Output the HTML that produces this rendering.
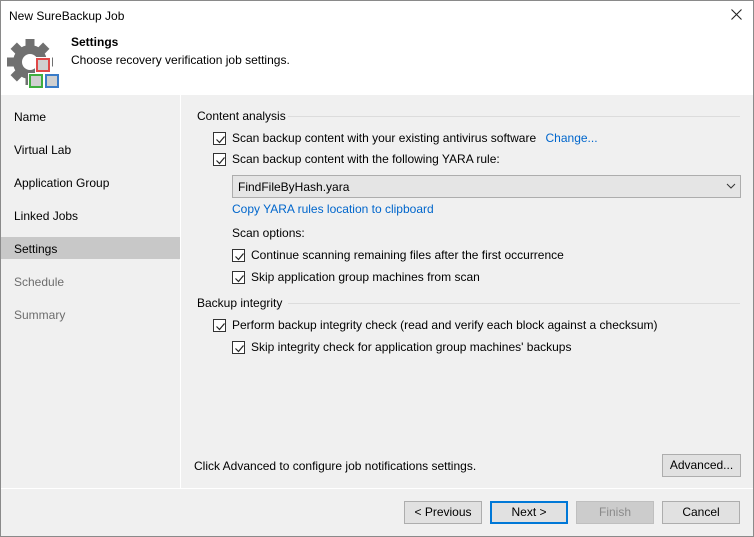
<!DOCTYPE html>
<html><head><style>
*{box-sizing:border-box;margin:0;padding:0}
body{width:754px;height:537px;overflow:hidden;font-family:"Liberation Sans",sans-serif;font-size:12px;color:#000;background:#f0f0f0;position:relative}
.win{position:absolute;left:0;top:0;width:754px;height:537px;border:1px solid #8a8a8a}
.abs{position:absolute;white-space:nowrap}
.cb{position:absolute;width:13px;height:13px;border:1px solid #333;background:#fff}
.cb svg{position:absolute;left:1px;top:1px}
.btn{position:absolute;height:23px;border:1px solid #adadad;background:#e1e1e1;text-align:center;line-height:21px}
.link{color:#0066cc}
.nav{position:absolute;left:14px}
</style></head><body>
<div class="win"></div>
<div class="abs" style="left:1px;top:1px;width:752px;height:94px;background:#fff"></div>
<div class="abs" style="left:9px;top:9px;font-size:12px">New SureBackup Job</div>
<svg class="abs" style="left:731px;top:9px" width="11" height="11"><path d="M0.5 0.5l10 10M10.5 0.5l-10 10" stroke="#222" stroke-width="1.1"/></svg>
<svg class="abs" style="left:2px;top:34px" width="60" height="56" viewBox="0 0 60 56">
<g fill="#707070"><circle cx="28" cy="28" r="17"/>
<rect x="23.5" y="5" width="9" height="46"/><rect x="5" y="23.5" width="46" height="9"/>
<rect x="23.5" y="5" width="9" height="46" transform="rotate(45 28 28)"/><rect x="23.5" y="5" width="9" height="46" transform="rotate(-45 28 28)"/></g>
<circle cx="28" cy="28" r="8" fill="#fff"/>
<rect x="33" y="23" width="17" height="16" fill="#fff"/>
<rect x="26" y="39" width="33" height="17" fill="#fff"/>
<rect x="35" y="25" width="12" height="12" fill="#d0d0d0" stroke="#e04848" stroke-width="2"/>
<rect x="28" y="41" width="12" height="12" fill="#d0d0d0" stroke="#3fae3f" stroke-width="2"/>
<rect x="44" y="41" width="12" height="12" fill="#d0d0d0" stroke="#3a7cc8" stroke-width="2"/>
</svg>
<div class="abs" style="left:71px;top:35px;font-weight:bold">Settings</div>
<div class="abs" style="left:71px;top:53px">Choose recovery verification job settings.</div>
<div class="abs" style="left:180px;top:95px;width:1px;height:393px;background:#fff"></div>
<div class="abs" style="left:1px;top:237px;width:179px;height:22px;background:#c8c8c8"></div>
<div class="nav abs" style="top:110px">Name</div>
<div class="nav abs" style="top:143px">Virtual Lab</div>
<div class="nav abs" style="top:176px">Application Group</div>
<div class="nav abs" style="top:209px">Linked Jobs</div>
<div class="nav abs" style="top:242px">Settings</div>
<div class="nav abs" style="top:275px;color:#6d6d6d">Schedule</div>
<div class="nav abs" style="top:308px;color:#6d6d6d">Summary</div>

<div class="abs" style="left:197px;top:109px">Content analysis</div>
<div class="abs" style="left:288px;top:116px;width:452px;height:1px;background:#dcdcdc"></div>
<div class="cb" style="left:213px;top:132px"><svg width="11" height="11"><path d="M1.5 5.5l3 3 5-6" fill="none" stroke="#222" stroke-width="1.2"/></svg></div>
<div class="abs" style="left:232px;top:131px">Scan backup content with your existing antivirus software <span class="link" style="margin-left:6px">Change...</span></div>
<div class="cb" style="left:213px;top:153px"><svg width="11" height="11"><path d="M1.5 5.5l3 3 5-6" fill="none" stroke="#222" stroke-width="1.2"/></svg></div>
<div class="abs" style="left:232px;top:152px">Scan backup content with the following YARA rule:</div>
<div class="abs" style="left:232px;top:175px;width:509px;height:23px;background:#e5e5e5;border:1px solid #adadad;padding:4px 0 0 5px">FindFileByHash.yara</div>
<svg class="abs" style="left:726px;top:183px" width="10" height="6"><path d="M1 1l4 4 4-4" fill="none" stroke="#333"/></svg>
<div class="abs link" style="left:232px;top:202px">Copy YARA rules location to clipboard</div>
<div class="abs" style="left:232px;top:226px">Scan options:</div>
<div class="cb" style="left:232px;top:249px"><svg width="11" height="11"><path d="M1.5 5.5l3 3 5-6" fill="none" stroke="#222" stroke-width="1.2"/></svg></div>
<div class="abs" style="left:251px;top:248px">Continue scanning remaining files after the first occurrence</div>
<div class="cb" style="left:232px;top:271px"><svg width="11" height="11"><path d="M1.5 5.5l3 3 5-6" fill="none" stroke="#222" stroke-width="1.2"/></svg></div>
<div class="abs" style="left:251px;top:270px">Skip application group machines from scan</div>
<div class="abs" style="left:197px;top:296px">Backup integrity</div>
<div class="abs" style="left:288px;top:303px;width:452px;height:1px;background:#dcdcdc"></div>
<div class="cb" style="left:213px;top:319px"><svg width="11" height="11"><path d="M1.5 5.5l3 3 5-6" fill="none" stroke="#222" stroke-width="1.2"/></svg></div>
<div class="abs" style="left:232px;top:318px">Perform backup integrity check (read and verify each block against a checksum)</div>
<div class="cb" style="left:232px;top:341px"><svg width="11" height="11"><path d="M1.5 5.5l3 3 5-6" fill="none" stroke="#222" stroke-width="1.2"/></svg></div>
<div class="abs" style="left:251px;top:340px">Skip integrity check for application group machines' backups</div>

<div class="abs" style="left:194px;top:459px">Click Advanced to configure job notifications settings.</div>
<div class="btn" style="left:662px;top:454px;width:79px">Advanced...</div>
<div class="abs" style="left:1px;top:488px;width:752px;height:1px;background:#fff"></div>
<div class="btn" style="left:404px;top:501px;width:78px">&lt; Previous</div>
<div class="btn" style="left:490px;top:501px;width:78px;border:2px solid #0078d7;line-height:19px">Next &gt;</div>
<div class="btn" style="left:576px;top:501px;width:78px;background:#cccccc;border-color:#bfbfbf;color:#8a8a8a">Finish</div>
<div class="btn" style="left:662px;top:501px;width:78px">Cancel</div>
</body></html>
